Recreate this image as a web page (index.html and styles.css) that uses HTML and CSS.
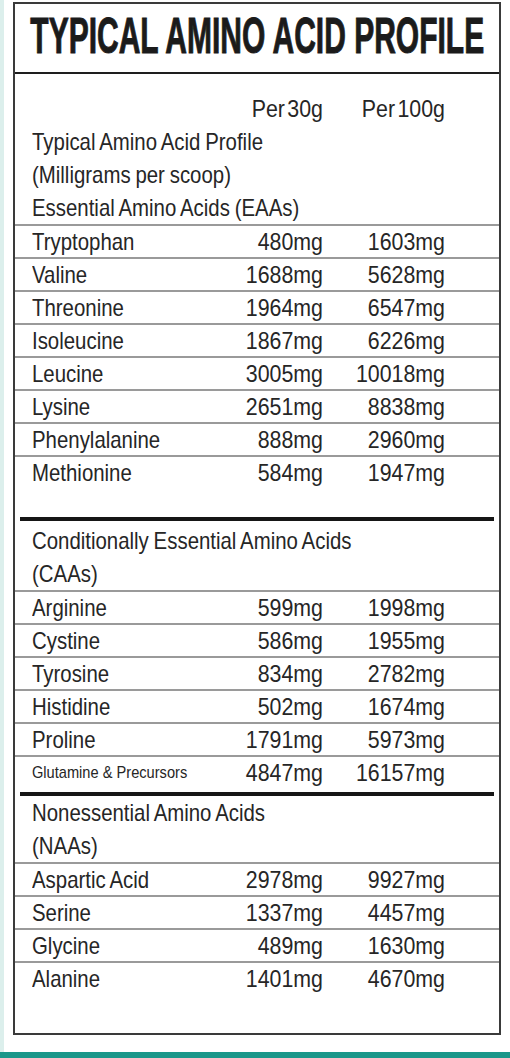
FILE: index.html
```html
<!DOCTYPE html>
<html lang="en">
<head>
<meta charset="utf-8">
<title>Typical Amino Acid Profile</title>
<link rel="stylesheet" href="styles.css">
</head>
<body>
<div class="screen">
  <div class="main">
    <div class="box">
      <div class="title"><span class="title-text">TYPICAL AMINO ACID PROFILE</span></div>

      <div class="intro">
        <div class="row plain"><span class="label"></span><span class="num">Per 30g</span><span class="num">Per 100g</span></div>
        <div class="row plain"><span class="label wide">Typical Amino Acid Profile</span></div>
        <div class="row plain"><span class="label wide">(Milligrams per scoop)</span></div>
        <div class="row plain"><span class="label wide">Essential Amino Acids (EAAs)</span></div>
      </div>

      <div class="section eaa">
        <div class="row"><span class="label">Tryptophan</span><span class="num">480mg</span><span class="num">1603mg</span></div>
        <div class="row"><span class="label">Valine</span><span class="num">1688mg</span><span class="num">5628mg</span></div>
        <div class="row"><span class="label">Threonine</span><span class="num">1964mg</span><span class="num">6547mg</span></div>
        <div class="row"><span class="label">Isoleucine</span><span class="num">1867mg</span><span class="num">6226mg</span></div>
        <div class="row"><span class="label">Leucine</span><span class="num">3005mg</span><span class="num">10018mg</span></div>
        <div class="row"><span class="label">Lysine</span><span class="num">2651mg</span><span class="num">8838mg</span></div>
        <div class="row"><span class="label">Phenylalanine</span><span class="num">888mg</span><span class="num">2960mg</span></div>
        <div class="row"><span class="label">Methionine</span><span class="num">584mg</span><span class="num">1947mg</span></div>
      </div>

      <div class="rule rule-first"></div>

      <div class="section caa">
        <div class="row plain"><span class="label wide">Conditionally Essential Amino Acids</span></div>
        <div class="row plain"><span class="label wide">(CAAs)</span></div>
        <div class="row"><span class="label">Arginine</span><span class="num">599mg</span><span class="num">1998mg</span></div>
        <div class="row"><span class="label">Cystine</span><span class="num">586mg</span><span class="num">1955mg</span></div>
        <div class="row"><span class="label">Tyrosine</span><span class="num">834mg</span><span class="num">2782mg</span></div>
        <div class="row"><span class="label">Histidine</span><span class="num">502mg</span><span class="num">1674mg</span></div>
        <div class="row"><span class="label">Proline</span><span class="num">1791mg</span><span class="num">5973mg</span></div>
        <div class="row"><span class="label small">Glutamine &amp; Precursors</span><span class="num">4847mg</span><span class="num">16157mg</span></div>
      </div>

      <div class="rule rule-second"></div>

      <div class="section naa">
        <div class="row plain"><span class="label wide">Nonessential Amino Acids</span></div>
        <div class="row plain"><span class="label wide">(NAAs)</span></div>
        <div class="row"><span class="label">Aspartic Acid</span><span class="num">2978mg</span><span class="num">9927mg</span></div>
        <div class="row"><span class="label">Serine</span><span class="num">1337mg</span><span class="num">4457mg</span></div>
        <div class="row"><span class="label">Glycine</span><span class="num">489mg</span><span class="num">1630mg</span></div>
        <div class="row"><span class="label">Alanine</span><span class="num">1401mg</span><span class="num">4670mg</span></div>
      </div>
    </div>
  </div>
  <div class="bar"></div>
</div>
</body>
</html>
```

FILE: styles.css
```css
* {
  box-sizing: border-box;
}

html, body {
  margin: 0;
  padding: 0;
  background: #ffffff;
}

body {
  font-family: "Liberation Sans", Arial, sans-serif;
  color: #262626;
}

.screen {
  width: 510px;
  height: 1058px;
  display: flex;
  flex-direction: column;
}

.main {
  flex: 1;
  border-left: 4px solid #dcefec;
  padding: 2px 0 0 9px;
}

.bar {
  height: 6px;
  background: #1a978a;
}

.box {
  width: 488px;
  height: 1033px;
  border: 2px solid #3a3a3a;
  display: flex;
  flex-direction: column;
}

.title {
  height: 70px;
  padding: 7px 0 11px;
  border-bottom: 2px solid #1e1e1e;
  display: flex;
  justify-content: center;
  overflow: visible;
}

.title-text {
  display: inline-block;
  font-weight: bold;
  font-size: 50px;
  line-height: 50px;
  color: #1b1b1b;
  white-space: nowrap;
  -webkit-text-stroke: 1px #1b1b1b;
  transform: scaleX(0.6);
  transform-origin: center center;
}

.intro {
  padding-top: 18px;
}

.row {
  display: grid;
  grid-template-columns: 1fr 110px 122px;
  padding: 0 54px 0 17px;
  height: 33px;
  border-top: 2px solid #9a9a9a;
  font-size: 24px;
  line-height: 31px;
  white-space: nowrap;
}

.row.plain {
  border-top: none;
  line-height: 33px;
}

.label {
  transform: scaleX(0.85);
  transform-origin: left center;
  word-spacing: -1px;
}

.label.wide {
  grid-column: 1 / -1;
}

.label.small {
  font-size: 17px;
  transform: scaleX(0.86);
  word-spacing: 0;
}

.num {
  text-align: right;
  transform: scaleX(0.89);
  transform-origin: right center;
  word-spacing: -4px;
}

.eaa {
  padding-bottom: 29px;
}

.rule {
  height: 4px;
  margin: 0 5px;
  background: #161616;
}

.caa {
  padding-top: 3px;
}

.rule-second {
  margin-top: 4px;
}
```
